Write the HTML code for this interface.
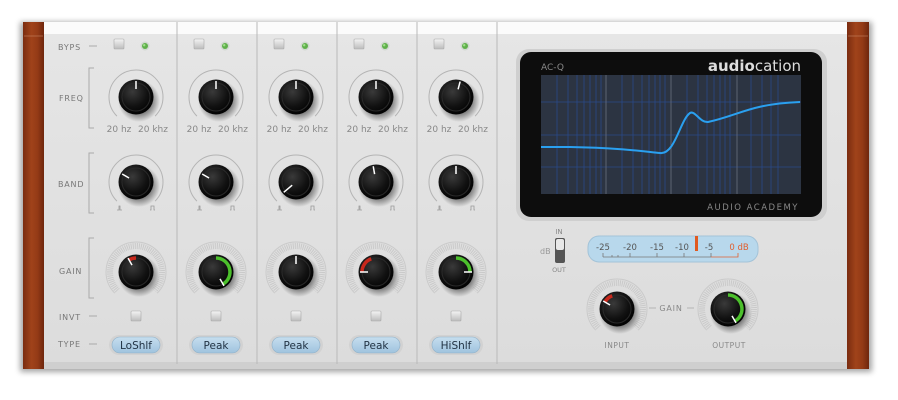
<!DOCTYPE html>
<html><head><meta charset="utf-8"><style>
html,body{margin:0;padding:0;background:#fff;width:898px;height:400px;overflow:hidden}
svg{display:block}
text{font-family:"DejaVu Sans","Liberation Sans",sans-serif}
</style></head><body>
<svg width="898" height="400" viewBox="0 0 898 400" xmlns="http://www.w3.org/2000/svg">
<defs>
<linearGradient id="wood" x1="0" x2="1" y1="0" y2="0">
<stop offset="0" stop-color="#7a2c10"/><stop offset=".4" stop-color="#a0431a"/><stop offset=".7" stop-color="#933a16"/><stop offset="1" stop-color="#6e260d"/></linearGradient>
<linearGradient id="panel" x1="0" x2="0" y1="0" y2="1">
<stop offset="0" stop-color="#e6e6e6"/><stop offset="1" stop-color="#dcdcdc"/></linearGradient>
<radialGradient id="kb" cx=".4" cy=".35" r=".7">
<stop offset="0" stop-color="#3a3a3a"/><stop offset=".6" stop-color="#111"/><stop offset="1" stop-color="#000"/></radialGradient>
<radialGradient id="ksh" cx=".5" cy=".5" r=".5">
<stop offset=".6" stop-color="#000" stop-opacity=".45"/><stop offset="1" stop-color="#000" stop-opacity="0"/></radialGradient>
<linearGradient id="btn" x1="0" x2="0" y1="0" y2="1"><stop offset="0" stop-color="#f4f4f4"/><stop offset="1" stop-color="#bcbcbc"/></linearGradient>
<linearGradient id="pill" x1="0" x2="0" y1="0" y2="1"><stop offset="0" stop-color="#c6deef"/><stop offset="1" stop-color="#9fc3de"/></linearGradient>
<filter id="sh" x="-5%" y="-10%" width="110%" height="120%"><feGaussianBlur stdDeviation="3"/></filter>
<g id="knob">
<circle cx="3" cy="4" r="21" fill="url(#ksh)"/>
<circle r="17.5" fill="url(#kb)"/>
<circle r="14" fill="none" stroke="#2a2a2a" stroke-width="1"/>
</g>
<g id="fring"><path d="M-19.1 19.1 A27 27 0 1 1 19.1 19.1" fill="none" stroke="#b4b4b4" stroke-width="1"/></g>
<g id="gring">
<path d="M-18.4 18.4 A26 26 0 1 1 18.4 18.4" fill="none" stroke="#c8c8c8" stroke-width="6" stroke-dasharray="0.9 1.1"/>
<path d="M-21.2 21.2 A30 30 0 1 1 21.2 21.2" fill="none" stroke="#cacaca" stroke-width="1"/>
</g>
<g id="sq"><rect x="-5" y="-5" width="10" height="10" rx="1" fill="url(#btn)" stroke="#aaa" stroke-width=".6"/></g>
<g id="led"><circle r="4.5" fill="#d0d8d0"/><circle r="3" fill="#5fb04a"/><circle cx="-.8" cy="-.8" r="1.2" fill="#9fe08a"/></g>
</defs>

<rect x="20" y="22" width="852" height="350" fill="#000" opacity=".35" filter="url(#sh)"/>
<!-- panel -->
<rect x="43" y="22" width="804" height="347" fill="url(#panel)"/>
<rect x="43" y="22" width="804" height="12" fill="#fbfbfb"/>
<rect x="43" y="362" width="804" height="7" fill="#cfcfcf"/>
<rect x="23" y="22" width="21" height="347" fill="url(#wood)"/>
<rect x="847" y="22" width="22" height="347" fill="url(#wood)"/>
<line x1="24" y1="36" x2="43" y2="36" stroke="#d09070" stroke-width=".6"/>
<line x1="848" y1="36" x2="868" y2="36" stroke="#d09070" stroke-width=".6"/>
<!-- dividers -->
<g stroke="#b9b9b9" stroke-width="1">
<line x1="177" y1="22" x2="177" y2="364"/><line x1="257" y1="22" x2="257" y2="364"/>
<line x1="337" y1="22" x2="337" y2="364"/><line x1="417" y1="22" x2="417" y2="364"/>
<line x1="497" y1="22" x2="497" y2="364"/>
</g>
<!-- labels -->
<g font-size="8" fill="#777" letter-spacing=".8">
<text x="58" y="50">BYPS</text><text x="59" y="101">FREQ</text><text x="58" y="187">BAND</text>
<text x="59" y="274">GAIN</text><text x="59" y="320">INVT</text><text x="58" y="347">TYPE</text>
</g>
<g stroke="#aaa" stroke-width="1" fill="none">
<line x1="89" y1="46" x2="97" y2="46"/><line x1="89" y1="316" x2="97" y2="316"/><line x1="89" y1="344" x2="97" y2="344"/>
<path d="M94 68 H89 V128 H94"/><path d="M94 153 H89 V213 H94"/><path d="M94 238 H89 V298 H94"/>
</g>

<!-- channels -->
<g transform="translate(136,0)">
<use href="#sq" x="-17" y="44"/><use href="#led" x="9" y="46"/>
<g transform="translate(0,97)"><use href="#fring"/><use href="#knob"/><line x1="0" y1="-8" x2="0" y2="-16" stroke="#fff" stroke-width="1.5"/></g>
<text x="-17" y="132" font-size="9" fill="#888" text-anchor="middle">20 hz</text><text x="17" y="132" font-size="9" fill="#888" text-anchor="middle">20 khz</text>
<g transform="translate(0,182)"><use href="#fring"/><use href="#knob"/><line x1="0" y1="-8" x2="0" y2="-16" stroke="#fff" stroke-width="1.5" transform="rotate(-60)"/></g>
<g transform="translate(0,272)"><use href="#gring"/><use href="#knob"/><path d="M-7 -12.1 A14 14 0 0 1 0 -14" fill="none" stroke="#c8281c" stroke-width="3.5"/><line x1="0" y1="-8" x2="0" y2="-16" stroke="#fff" stroke-width="1.5" transform="rotate(-30)"/></g>
<use href="#sq" y="316"/>
</g>
<g transform="translate(216,0)">
<use href="#sq" x="-17" y="44"/><use href="#led" x="9" y="46"/>
<g transform="translate(0,97)"><use href="#fring"/><use href="#knob"/><line x1="0" y1="-8" x2="0" y2="-16" stroke="#fff" stroke-width="1.5"/></g>
<text x="-17" y="132" font-size="9" fill="#888" text-anchor="middle">20 hz</text><text x="17" y="132" font-size="9" fill="#888" text-anchor="middle">20 khz</text>
<g transform="translate(0,182)"><use href="#fring"/><use href="#knob"/><line x1="0" y1="-8" x2="0" y2="-16" stroke="#fff" stroke-width="1.5" transform="rotate(-60)"/></g>
<g transform="translate(0,272)"><use href="#gring"/><use href="#knob"/><path d="M0 -14 A14 14 0 0 1 7 12.1" fill="none" stroke="#4cc02c" stroke-width="3.5"/><line x1="0" y1="-8" x2="0" y2="-16" stroke="#fff" stroke-width="1.5" transform="rotate(150)"/></g>
<use href="#sq" y="316"/>
</g>
<g transform="translate(296,0)">
<use href="#sq" x="-17" y="44"/><use href="#led" x="9" y="46"/>
<g transform="translate(0,97)"><use href="#fring"/><use href="#knob"/><line x1="0" y1="-8" x2="0" y2="-16" stroke="#fff" stroke-width="1.5"/></g>
<text x="-17" y="132" font-size="9" fill="#888" text-anchor="middle">20 hz</text><text x="17" y="132" font-size="9" fill="#888" text-anchor="middle">20 khz</text>
<g transform="translate(0,182)"><use href="#fring"/><use href="#knob"/><line x1="0" y1="-5" x2="0" y2="-16" stroke="#fff" stroke-width="1.5" transform="rotate(-130)"/></g>
<g transform="translate(0,272)"><use href="#gring"/><use href="#knob"/><line x1="0" y1="-8" x2="0" y2="-16" stroke="#fff" stroke-width="1.5"/></g>
<use href="#sq" y="316"/>
</g>
<g transform="translate(376,0)">
<use href="#sq" x="-17" y="44"/><use href="#led" x="9" y="46"/>
<g transform="translate(0,97)"><use href="#fring"/><use href="#knob"/><line x1="0" y1="-8" x2="0" y2="-16" stroke="#fff" stroke-width="1.5"/></g>
<text x="-17" y="132" font-size="9" fill="#888" text-anchor="middle">20 hz</text><text x="17" y="132" font-size="9" fill="#888" text-anchor="middle">20 khz</text>
<g transform="translate(0,182)"><use href="#fring"/><use href="#knob"/><line x1="0" y1="-8" x2="0" y2="-16" stroke="#fff" stroke-width="1.5" transform="rotate(-10)"/></g>
<g transform="translate(0,272)"><use href="#gring"/><use href="#knob"/><path d="M-14 0 A14 14 0 0 1 -4.8 -13.2" fill="none" stroke="#c8281c" stroke-width="3.5"/><line x1="0" y1="-8" x2="0" y2="-16" stroke="#fff" stroke-width="1.5" transform="rotate(-90)"/></g>
<use href="#sq" y="316"/>
</g>
<g transform="translate(456,0)">
<use href="#sq" x="-17" y="44"/><use href="#led" x="9" y="46"/>
<g transform="translate(0,97)"><use href="#fring"/><use href="#knob"/><line x1="0" y1="-8" x2="0" y2="-16" stroke="#fff" stroke-width="1.5" transform="rotate(15)"/></g>
<text x="-17" y="132" font-size="9" fill="#888" text-anchor="middle">20 hz</text><text x="17" y="132" font-size="9" fill="#888" text-anchor="middle">20 khz</text>
<g transform="translate(0,182)"><use href="#fring"/><use href="#knob"/><line x1="0" y1="-8" x2="0" y2="-16" stroke="#fff" stroke-width="1.5"/></g>
<g transform="translate(0,272)"><use href="#gring"/><use href="#knob"/><path d="M0 -14 A14 14 0 0 1 14 0" fill="none" stroke="#4cc02c" stroke-width="3.5"/><line x1="0" y1="-8" x2="0" y2="-16" stroke="#fff" stroke-width="1.5" transform="rotate(90)"/></g>
<use href="#sq" y="316"/>
</g>
<!-- band glyphs -->
<g stroke="#999" stroke-width=".8" fill="none">
<path id="bg" d="M117 210 h2 v-4 h1 v4 h2 M150 210 h1 v-4 h3 v4 h1"/>
<use href="#bg" x="80"/><use href="#bg" x="160"/><use href="#bg" x="240"/><use href="#bg" x="320"/>
</g>
<!-- type pills -->
<g font-size="10.5" fill="#234" text-anchor="middle">
<rect x="109" y="335" width="54" height="20" rx="10" fill="#d2d2d2"/><rect x="112" y="337" width="48" height="16" rx="8" fill="url(#pill)" stroke="#8fb0c8" stroke-width=".6"/><text x="136" y="349">LoShlf</text>
<rect x="189" y="335" width="54" height="20" rx="10" fill="#d2d2d2"/><rect x="192" y="337" width="48" height="16" rx="8" fill="url(#pill)" stroke="#8fb0c8" stroke-width=".6"/><text x="216" y="349">Peak</text>
<rect x="269" y="335" width="54" height="20" rx="10" fill="#d2d2d2"/><rect x="272" y="337" width="48" height="16" rx="8" fill="url(#pill)" stroke="#8fb0c8" stroke-width=".6"/><text x="296" y="349">Peak</text>
<rect x="349" y="335" width="54" height="20" rx="10" fill="#d2d2d2"/><rect x="352" y="337" width="48" height="16" rx="8" fill="url(#pill)" stroke="#8fb0c8" stroke-width=".6"/><text x="376" y="349">Peak</text>
<rect x="429" y="335" width="54" height="20" rx="10" fill="#d2d2d2"/><rect x="432" y="337" width="48" height="16" rx="8" fill="url(#pill)" stroke="#8fb0c8" stroke-width=".6"/><text x="456" y="349">HiShlf</text>
</g>

<!-- display -->
<rect x="516" y="49" width="311" height="172" rx="13" fill="#cfcfcf"/>
<rect x="520" y="52" width="302" height="165" rx="11" fill="#0d0d0d"/>
<rect x="541" y="75" width="260" height="119" fill="#2c3442"/>
<g stroke="#2a4a8a" stroke-width=".8">
<line x1="557" y1="75" x2="557" y2="194"/><line x1="568" y1="75" x2="568" y2="194"/><line x1="577" y1="75" x2="577" y2="194"/><line x1="584" y1="75" x2="584" y2="194"/><line x1="590" y1="75" x2="590" y2="194"/><line x1="596" y1="75" x2="596" y2="194"/><line x1="601" y1="75" x2="601" y2="194"/>
<line x1="622" y1="75" x2="622" y2="194"/><line x1="633" y1="75" x2="633" y2="194"/><line x1="642" y1="75" x2="642" y2="194"/><line x1="649" y1="75" x2="649" y2="194"/><line x1="655" y1="75" x2="655" y2="194"/><line x1="660" y1="75" x2="660" y2="194"/><line x1="665" y1="75" x2="665" y2="194"/>
<line x1="687" y1="75" x2="687" y2="194"/><line x1="698" y1="75" x2="698" y2="194"/><line x1="707" y1="75" x2="707" y2="194"/><line x1="714" y1="75" x2="714" y2="194"/><line x1="720" y1="75" x2="720" y2="194"/><line x1="725" y1="75" x2="725" y2="194"/><line x1="730" y1="75" x2="730" y2="194"/>
<line x1="751" y1="75" x2="751" y2="194"/><line x1="762" y1="75" x2="762" y2="194"/><line x1="771" y1="75" x2="771" y2="194"/><line x1="778" y1="75" x2="778" y2="194"/>
<line x1="541" y1="102" x2="801" y2="102"/><line x1="541" y1="135" x2="801" y2="135"/><line x1="541" y1="167" x2="801" y2="167"/>
</g>
<g stroke="#6a7080" stroke-width=".8"><line x1="606" y1="75" x2="606" y2="194"/><line x1="671" y1="75" x2="671" y2="194"/><line x1="737" y1="75" x2="737" y2="194"/></g>
<path d="M541 147 L570 147 C620 148 640 151 660 153 C675 155 680 120 690 113 C695 110 700 123 708 122 C740 115 750 104 800 102" fill="none" stroke="#2aa0f0" stroke-width="2"/>
<text x="541" y="70" font-size="9" fill="#888">AC-Q</text>
<text x="801" y="71" font-size="15" fill="#ddd" text-anchor="end"><tspan font-weight="bold">audio</tspan>cation</text>
<text x="799" y="210" font-size="8.5" fill="#888" text-anchor="end" letter-spacing="1.5">AUDIO ACADEMY</text>

<!-- toggle & meter -->
<text x="559" y="234" font-size="7" fill="#888" text-anchor="middle">IN</text>
<text x="559" y="272" font-size="6.5" fill="#888" text-anchor="middle">OUT</text>
<text x="540" y="254" font-size="8" fill="#999">dB</text>
<rect x="555" y="238" width="10" height="25" rx="2" fill="#555"/>
<rect x="556" y="239" width="8" height="11" rx="2" fill="#e8e8e8"/>
<rect x="588" y="236" width="170" height="26" rx="11" fill="#b8d8ec" stroke="#a3c3d8"/>
<g font-size="8.5" fill="#555" text-anchor="middle">
<text x="603" y="250">-25</text><text x="630" y="250">-20</text><text x="657" y="250">-15</text><text x="682" y="250">-10</text><text x="709" y="250">-5</text>
</g>
<text x="739" y="250" font-size="8.5" fill="#e06030" text-anchor="middle">0 dB</text>
<path d="M603 257 H711 M603 253v4 M612 255v2 M618 255v2 M630 253v4 M657 253v4 M684 253v4 M711 253v4" stroke="#777" stroke-width=".8" fill="none"/>
<path d="M711 257 H738 V253" stroke="#e06030" stroke-width=".8" fill="none"/>
<rect x="695" y="236" width="3" height="15" fill="#e05a20"/>

<!-- input/output -->
<g transform="translate(617,309)"><use href="#gring"/><use href="#knob"/><path d="M-12.1 -7 A14 14 0 0 1 -4.8 -13.2" fill="none" stroke="#c8281c" stroke-width="3.5"/><line x1="0" y1="-8" x2="0" y2="-16" stroke="#fff" stroke-width="1.5" transform="rotate(-60)"/></g>
<g transform="translate(728,309)"><use href="#gring"/><use href="#knob"/><path d="M0 -14 A14 14 0 0 1 7 12.1" fill="none" stroke="#4cc02c" stroke-width="3.5"/><line x1="0" y1="-8" x2="0" y2="-16" stroke="#fff" stroke-width="1.5" transform="rotate(150)"/></g>
<text x="671" y="311" font-size="8" fill="#888" text-anchor="middle" letter-spacing=".8">GAIN</text>
<g stroke="#aaa" stroke-width=".8"><line x1="649" y1="308" x2="656" y2="308"/><line x1="687" y1="308" x2="694" y2="308"/></g>
<text x="617" y="348" font-size="7.5" fill="#888" text-anchor="middle" letter-spacing=".5">INPUT</text>
<text x="729" y="348" font-size="7.5" fill="#888" text-anchor="middle" letter-spacing=".5">OUTPUT</text>
</svg>
</body></html>
